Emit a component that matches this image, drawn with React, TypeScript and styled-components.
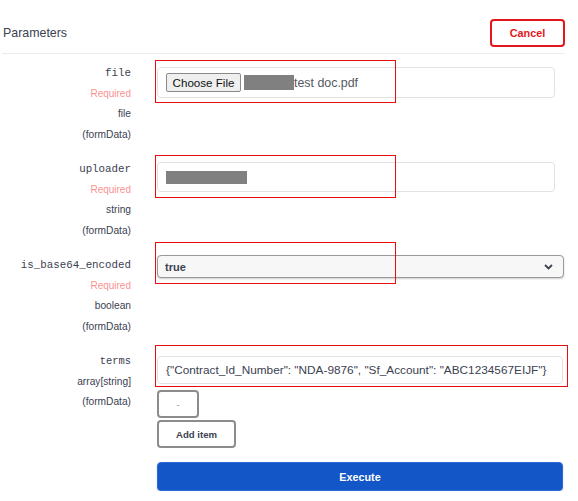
import React from "react";
import styled, { createGlobalStyle } from "styled-components";

const Global = createGlobalStyle`
  html, body { margin: 0; padding: 0; background: #fff; }
  body { font-family: "Liberation Sans", Arial, sans-serif; color: #3b4151; }
  * { box-sizing: border-box; }
`;

const Page = styled.div`
  width: 565px;
  padding-left: 2px;
`;

const Header = styled.div`
  display: flex;
  align-items: center;
  justify-content: space-between;
  height: 54px;
  padding: 19px 0 7px 1px;
  border-bottom: 1px solid #ececec;
`;

const Title = styled.h4`
  margin: 0;
  font-size: 12.4px;
  font-weight: 400;
  color: #3b4151;
`;

const CancelButton = styled.button`
  width: 75px;
  height: 28px;
  border: 2px solid #e4161c;
  border-radius: 4px;
  background: #fff;
  color: #e4161c;
  font-family: "Liberation Sans", Arial, sans-serif;
  font-weight: 700;
  font-size: 10.8px;
  padding: 0;
`;

const Rows = styled.div`
  display: flex;
  flex-direction: column;
  gap: 14px;
  padding-top: 9px;
`;

const Row = styled.div`
  display: grid;
  grid-template-columns: 129px 1fr;
  column-gap: 26px;
`;

const LabelCell = styled.div`
  display: flex;
  flex-direction: column;
  align-items: flex-end;
`;

const Name = styled.div<{ $size?: number }>`
  font-family: "Liberation Mono", "Courier New", monospace;
  font-size: ${(p) => p.$size ?? 10.8}px;
  line-height: 20.5px;
  color: #3b4151;
`;

const Meta = styled.div<{ $required?: boolean }>`
  font-size: ${(p) => (p.$required ? 10 : 10.2)}px;
  line-height: 20.5px;
  color: ${(p) => (p.$required ? "rgba(249, 62, 62, 0.6)" : "#3b4151")};
`;

const ValueCell = styled.div<{ $pad: number }>`
  display: flex;
  flex-direction: column;
  align-items: flex-start;
  padding-top: ${(p) => p.$pad}px;
`;

const Field = styled.div`
  position: relative;
`;

const Highlight = styled.div<{ $top: number; $w: number; $h: number }>`
  position: absolute;
  left: -2px;
  top: ${(p) => p.$top}px;
  width: ${(p) => p.$w}px;
  height: ${(p) => p.$h}px;
  border: 1.5px solid #ea0d0d;
  pointer-events: none;
`;

const TextBox = styled.div<{ $w: number; $h: number }>`
  display: flex;
  align-items: center;
  width: ${(p) => p.$w}px;
  height: ${(p) => p.$h}px;
  padding: 0 8px;
  border: 1px solid #e2e2e2;
  border-radius: 4px;
  background: #fff;
  font-size: 11.8px;
  color: #3b4151;
  white-space: nowrap;
  overflow: hidden;
`;

const ChooseButton = styled.span`
  display: inline-flex;
  align-items: center;
  justify-content: center;
  width: 75px;
  height: 19px;
  border: 1px solid #8a8a8a;
  border-radius: 2px;
  background: #efefef;
  font-size: 11.6px;
  color: #111;
`;

const Redacted = styled.span<{ $w: number; $h: number; $ml: number }>`
  display: inline-block;
  width: ${(p) => p.$w}px;
  height: ${(p) => p.$h}px;
  margin-left: ${(p) => p.$ml}px;
  background: #808080;
`;

const FileName = styled.span`
  font-size: 12.4px;
  color: #55595f;
`;

const SelectBox = styled.div`
  display: flex;
  align-items: center;
  justify-content: space-between;
  width: 407px;
  height: 23px;
  padding: 0 10px 0 7px;
  border: 1.5px solid #9a9a9a;
  border-radius: 4px;
  background: #f7f7f7;
  box-shadow: 0 1px 2px rgba(0, 0, 0, 0.2);
  font-size: 11px;
  font-weight: 700;
  color: #3b4151;
`;

const SmallButton = styled.button<{ $w: number; $mt: number }>`
  width: ${(p) => p.$w}px;
  height: 28px;
  margin-top: ${(p) => p.$mt}px;
  border: 2px solid #8c8c8c;
  border-radius: 4px;
  background: #fff;
  font-family: "Liberation Sans", Arial, sans-serif;
  font-size: 9.6px;
  font-weight: 700;
  color: #3b4151;
  padding: 0;
`;

const MinusButton = styled(SmallButton)`
  font-weight: 400;
  color: #999;
`;

const ExecuteRow = styled.div`
  padding: 14px 0 0 155px;
`;

const ExecuteButton = styled.button`
  width: 406px;
  height: 29px;
  border: 1px solid #2d6ad6;
  border-radius: 4px;
  background: #1356c7;
  color: #fff;
  font-family: "Liberation Sans", Arial, sans-serif;
  font-size: 10.8px;
  font-weight: 700;
  padding: 0;
  box-shadow: 0 1px 2px rgba(0, 0, 0, 0.2);
`;

const Chevron = () => (
  <svg width="9" height="6" viewBox="0 0 9 6">
    <path d="M1 1 L4.5 4.5 L8 1" fill="none" stroke="#3b4151" strokeWidth="1.8" />
  </svg>
);

export default function App() {
  return (
    <Page>
      <Global />
      <Header>
        <Title>Parameters</Title>
        <CancelButton>Cancel</CancelButton>
      </Header>
      <Rows>
        <Row>
          <LabelCell>
            <Name>file</Name>
            <Meta $required>Required</Meta>
            <Meta>file</Meta>
            <Meta>(formData)</Meta>
          </LabelCell>
          <ValueCell $pad={4}>
            <Field>
              <TextBox $w={398} $h={31}>
                <ChooseButton>Choose File</ChooseButton>
                <Redacted $w={50} $h={15} $ml={3} />
                <FileName>test doc.pdf</FileName>
              </TextBox>
              <Highlight $top={-7} $w={241} $h={43} />
            </Field>
          </ValueCell>
        </Row>
        <Row>
          <LabelCell>
            <Name>uploader</Name>
            <Meta $required>Required</Meta>
            <Meta>string</Meta>
            <Meta>(formData)</Meta>
          </LabelCell>
          <ValueCell $pad={3}>
            <Field>
              <TextBox $w={398} $h={30}>
                <Redacted $w={81} $h={13} $ml={0} />
              </TextBox>
              <Highlight $top={-7} $w={241} $h={43} />
            </Field>
          </ValueCell>
        </Row>
        <Row>
          <LabelCell>
            <Name>is_base64_encoded</Name>
            <Meta $required>Required</Meta>
            <Meta>boolean</Meta>
            <Meta>(formData)</Meta>
          </LabelCell>
          <ValueCell $pad={0}>
            <Field>
              <SelectBox>
                <span>true</span>
                <Chevron />
              </SelectBox>
              <Highlight $top={-13} $w={241} $h={42} />
            </Field>
          </ValueCell>
        </Row>
        <Row>
          <LabelCell>
            <Name $size={10.4}>terms</Name>
            <Meta>array[string]</Meta>
            <Meta>(formData)</Meta>
          </LabelCell>
          <ValueCell $pad={5}>
            <Field>
              <TextBox $w={406} $h={28}>
                {'{"Contract_Id_Number": "NDA-9876", "Sf_Account": "ABC1234567EIJF"}'}
              </TextBox>
              <Highlight $top={-11} $w={413} $h={42} />
            </Field>
            <MinusButton $w={42} $mt={6}>-</MinusButton>
            <SmallButton $w={79} $mt={2}>Add item</SmallButton>
          </ValueCell>
        </Row>
      </Rows>
      <ExecuteRow>
        <ExecuteButton>Execute</ExecuteButton>
      </ExecuteRow>
    </Page>
  );
}
